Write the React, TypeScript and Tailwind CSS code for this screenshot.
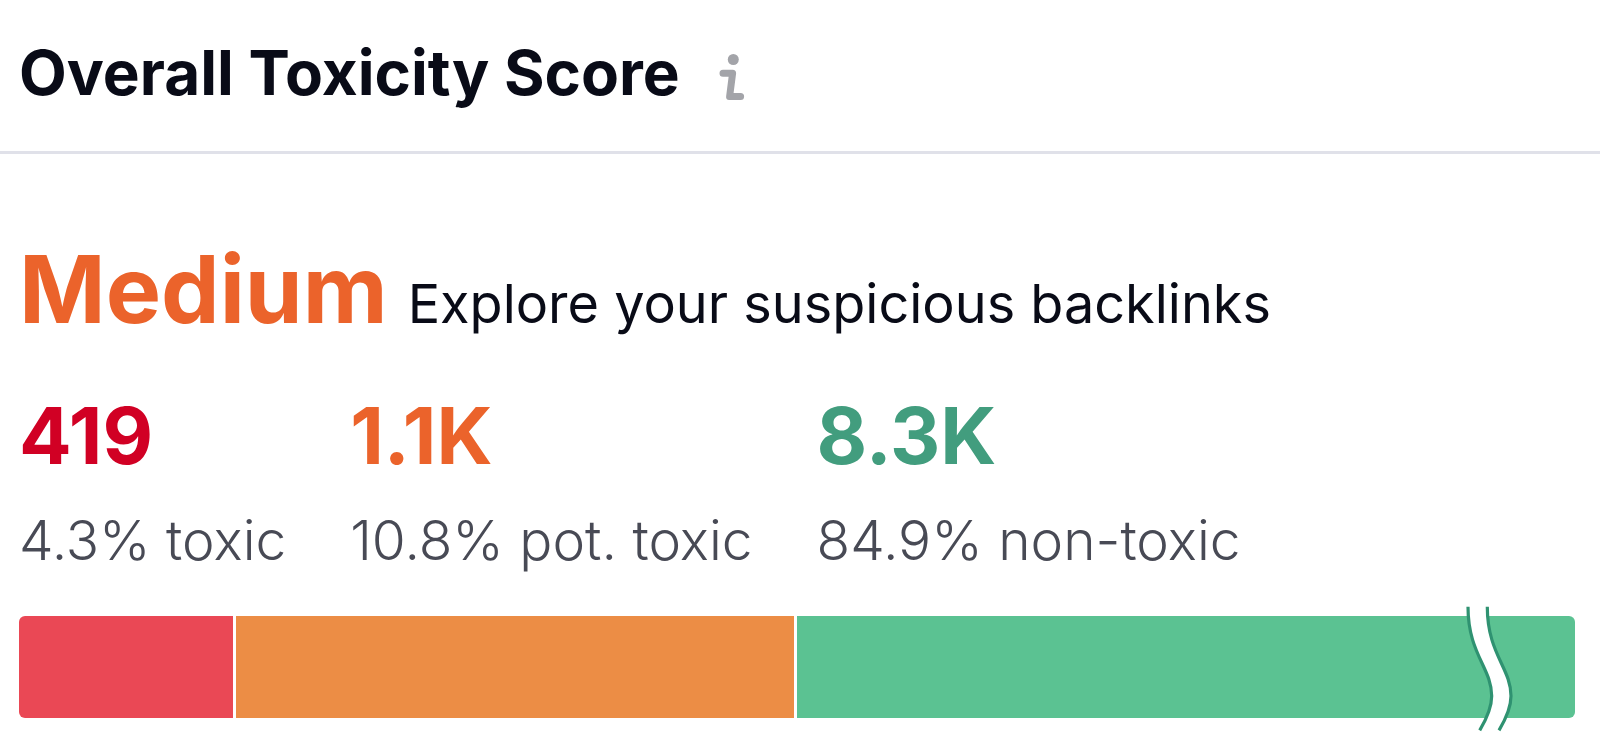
import { clsx } from "clsx";

const InfoIcon = () => (
  <svg width="30" height="52" viewBox="0 0 30 52" fill="none" aria-hidden="true">
    <circle cx="17.3" cy="7.5" r="5.5" fill="#a3a4a9" />
    <path
      d="M7 21.3H16.6L13.6 44.6H24.6"
      stroke="#a3a4a9"
      strokeWidth="7"
      strokeLinecap="round"
      strokeLinejoin="round"
    />
  </svg>
);

// Axis break drawn over the longest segment
const BarBreak = () => (
  <svg
    className="absolute -top-3 right-[62px]"
    width="50"
    height="130"
    viewBox="0 0 50 130"
    fill="none"
    aria-hidden="true"
  >
    <path
      d="M5 2.7C5 50 28.7 64 28.7 92C28.7 106 21.7 118 16.7 126.3H36C41 118 48 106 48 92C48 64 24.3 50 24.3 2.7Z"
      fill="#fff"
    />
    <path
      d="M5 2.7C5 50 28.7 64 28.7 92C28.7 106 21.7 118 16.7 126.3M24.3 2.7C24.3 50 48 64 48 92C48 106 41 118 36 126.3"
      stroke="#2f9271"
      strokeWidth="3.2"
    />
  </svg>
);

const App = () => {
  return (
    <div className="min-h-screen bg-white font-['Inter',sans-serif] text-[#090b17]">
      {/* Header */}
      <header className="flex items-center gap-9 border-b-[3px] border-[#e0e1e9] px-[19px] pt-[37px] pb-[42px]">
        <h1 className="text-[62px] leading-[72px] font-bold">Overall Toxicity Score</h1>
        <button type="button" aria-label="About this score" className="pt-2.5">
          <InfoIcon />
        </button>
      </header>

      <main className="px-[19px] pt-[87px]">
        <div className="flex items-baseline gap-5">
          <h2 className="text-[93px] leading-24 font-bold text-[#eb632b]">Medium</h2>
          <p className="text-[54px] leading-16">Explore your suspicious backlinks</p>
        </div>

        {/* Totals */}
        <dl className="mt-[59px] flex gap-16">
          {segments.map((segment) => (
            <div key={segment.label} className="flex flex-col-reverse gap-8">
              <dt className="text-[55px] leading-16 font-light text-[#484a55]">{segment.label}</dt>
              <dd className={clsx("text-[78px] leading-20 font-bold", segment.text)}>{segment.total}</dd>
            </div>
          ))}
        </dl>

        {/* Bar */}
        <div className="mt-11 mr-1.5 flex h-[102px] gap-[3px]">
          {segments.map((segment) => (
            <div
              key={segment.label}
              className={clsx("relative first:rounded-l-md last:rounded-r-md", segment.bar)}
              style={{ flexGrow: segment.share, flexBasis: 0 }}
            >
              {segment.broken && <BarBreak />}
            </div>
          ))}
        </div>
      </main>
    </div>
  );
};

const segments = [
  {
    total: "419",
    label: "4.3% toxic",
    share: 214,
    text: "text-[#d10024]",
    bar: "bg-[#ea4855]",
    broken: false,
  },
  {
    total: "1.1K",
    label: "10.8% pot. toxic",
    share: 557,
    text: "text-[#eb632b]",
    bar: "bg-[#ec8d45]",
    broken: false,
  },
  {
    total: "8.3K",
    label: "84.9% non-toxic",
    share: 778,
    text: "text-[#429d7e]",
    bar: "bg-[#5bc292]",
    broken: true,
  },
];

export default App;
